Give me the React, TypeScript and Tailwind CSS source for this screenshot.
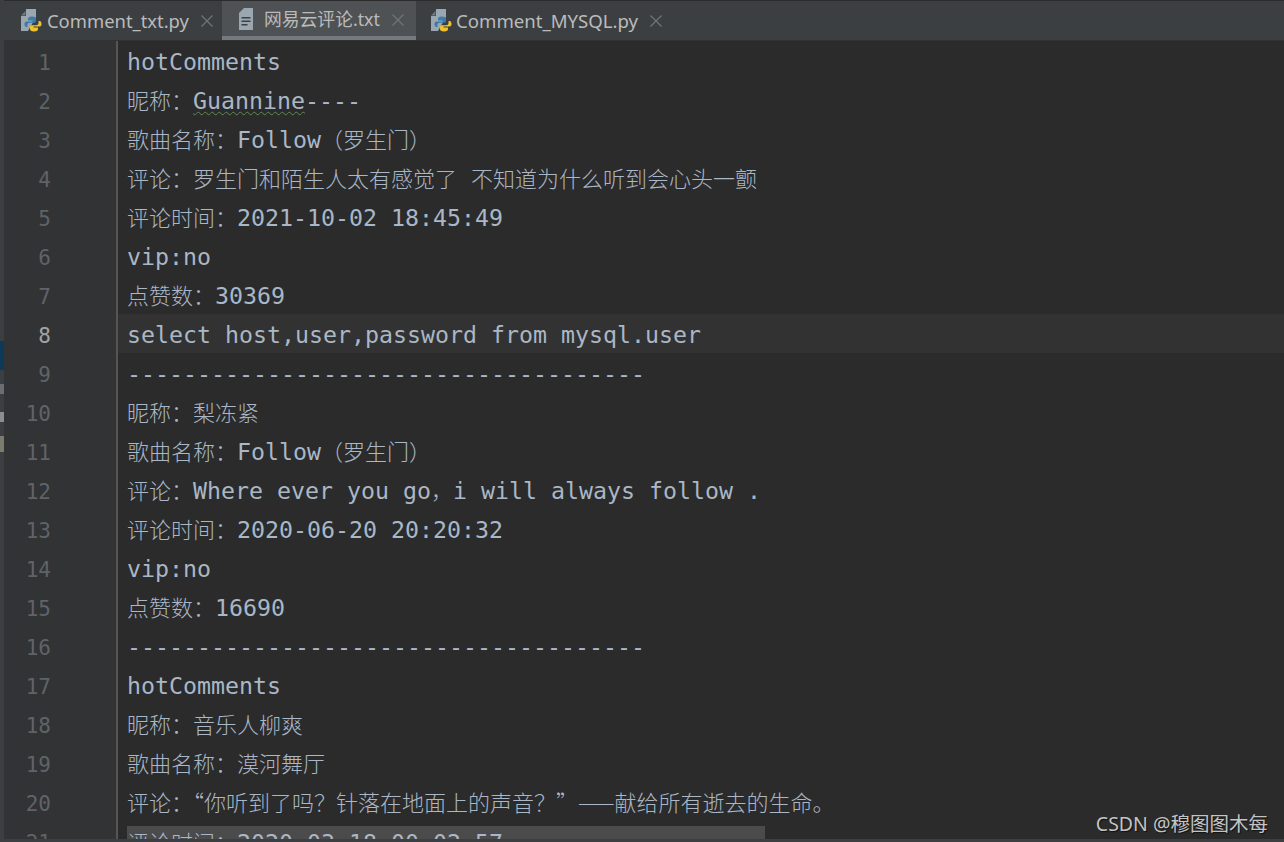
const lines = [
  "hotComments",
  "昵称：~Guannine~----",
  "歌曲名称：Follow（罗生门）",
  "评论：罗生门和陌生人太有感觉了 不知道为什么听到会心头一颤",
  "评论时间：2021-10-02 18:45:49",
  "vip:no",
  "点赞数：30369",
  "select host,user,password from mysql.user",
  "-------------------------------------",
  "昵称：梨冻紧",
  "歌曲名称：Follow（罗生门）",
  "评论：Where ever you go，i will always follow .",
  "评论时间：2020-06-20 20:20:32",
  "vip:no",
  "点赞数：16690",
  "-------------------------------------",
  "hotComments",
  "昵称：音乐人柳爽",
  "歌曲名称：漠河舞厅",
  "评论：“你听到了吗？针落在地面上的声音？”——献给所有逝去的生命。",
  "评论时间：2020-03-18 00:02:57",
];

function PyIcon() {
  return (
    <svg width="22" height="24" viewBox="0 0 22 24" className="shrink-0">
      <path d="M6 1h10v8L8 23H1V8h5z" fill="#9aa7b0" />
      <path d="M1 7.500L5.500 3v4.500z" fill="#6e7a82" />
      <path d="M12 8.500c-3 0-4 1-4 2.500v1.500h4.500v1H6.500c-1.500 0-2 1-2 2.500s.5 3 2 3h1v-2c0-1.500 1-2.200 2.500-2.200h4c1.200 0 2-.6 2-1.800V11c0-1.500-1.200-2.500-4-2.500z" fill="#3b7cab" />
      <path d="M14 23.500c3 0 4-1 4-2.500v-1.500h-4.500v-1h6c1.500 0 2-1 2-2.500s-.5-3-2-3h-1v2c0 1.500-1 2.200-2.500 2.200h-4c-1.200 0-2 .6-2 1.800V21c0 1.500 1.200 2.500 4 2.500z" fill="#f0c22e" />
    </svg>
  );
}

function TxtIcon() {
  return (
    <svg width="16" height="22" viewBox="0 0 16 22" className="shrink-0">
      <path d="M1 5l5-5h9v22H1z" fill="#9aa7b0" />
      <path d="M3.500 9h9v1.500h-9zM3.500 12.500h9V14h-9zM3.500 16h6v1.500h-6z" fill="#3c3f41" />
    </svg>
  );
}

function CloseIcon() {
  return (
    <svg width="12" height="12" viewBox="0 0 12 12" className="shrink-0">
      <path d="M.5 .5l11 11M11.500 .5l-11 11" stroke="#6e7376" strokeWidth="1.300" />
    </svg>
  );
}

// cjk and latin have different sizes in the editor, so split the line into runs
function Run({ text }: { text: string }) {
  const parts = text.match(/[\u2014\u2018-\u201d\u3000-\u9fff\uff00-\uffef]+|[^\u2014\u2018-\u201d\u3000-\u9fff\uff00-\uffef]+/g) || [];
  return (
    <>
      {parts.map((p, i) =>
        /^[\u2014\u2018-\u201d\u3000-\u9fff\uff00-\uffef]/.test(p) ? (
          <span key={i} className="text-[22px] leading-none font-['Noto_Sans_CJK_SC',sans-serif] font-light">
            {p}
          </span>
        ) : (
          <span key={i}>{p}</span>
        ),
      )}
    </>
  );
}

function CodeLine({ text, index }: { text: string; index: number }) {
  const active = index === 7;
  const selected = index === 20;
  const [before, wavy, after] = text.includes("~") ? text.split("~") : [text, "", ""];
  return (
    <div className={`flex h-[39px] shrink-0 items-start ${active ? "bg-[#323232]" : ""}`}>
      <div
        className={`flex h-[39px] w-[114px] shrink-0 items-center border-r-2 border-[#555555] bg-[#313335] pt-[6px] ${active ? "text-[#a4a3a3]" : "text-[#606366]"}`}
      >
        <span className="w-[47px] text-right font-['DejaVu_Sans_Mono',monospace] text-[21px]">{index + 1}</span>
      </div>
      <div
        className={`ml-[9px] whitespace-pre font-['DejaVu_Sans_Mono',monospace] text-[23.250px] text-[#a9b7c6] ${selected ? "mt-[5px] h-[34px] w-[638px] bg-[#4b4b4b] leading-[33px]" : "leading-[42px]"}`}
      >
        <Run text={before} />
        {wavy && (
          <span className="underline decoration-wavy decoration-[#5f8a4f] decoration-1 underline-offset-2">
            <Run text={wavy} />
          </span>
        )}
        {after && <Run text={after} />}
      </div>
    </div>
  );
}

export default function App() {
  const tabs = [
    { name: "Comment_txt.py", icon: <PyIcon />, box: "w-[218px] pl-[16px]", label: "ml-[5px] text-[18.400px]", active: false },
    { name: "网易云评论.txt", icon: <TxtIcon />, box: "w-[194px] pl-[16px]", label: "ml-[10px] text-[17.800px]", active: true },
    { name: "Comment_MYSQL.py", icon: <PyIcon />, box: "w-[258px] pl-[14px]", label: "ml-[4px] text-[18.600px]", active: false },
  ];

  return (
    <div className="relative flex h-[842px] w-[1284px] overflow-hidden bg-[#3c3f41] font-['Noto_Sans','Noto_Sans_CJK_SC',sans-serif]">
      {/* bit of the project panel that is cut off on the left */}
      <div className="flex w-[4px] shrink-0 flex-col bg-[#3c3f41]">
        <div className="mt-[341px] h-[29px] bg-[#0d3a58]" />
        <div className="mt-[14px] h-[10px] bg-[#6b6e70]" />
        <div className="mt-[18px] h-[10px] bg-[#8b8d8e]" />
        <div className="mt-[14px] h-[16px] bg-[#7d7a6e]" />
      </div>

      <div className="flex min-w-0 flex-1 flex-col">
        <div className="h-px shrink-0 bg-[#2b2b2b]" />
        <div className="flex h-[39px] shrink-0 bg-[#3c3f41]">
          {tabs.map((t) => (
            <div
              key={t.name}
              className={`flex h-full shrink-0 items-center ${t.box} ${t.active ? "border-b-[4px] border-[#747a80] bg-[#4e5254]" : "pb-[1px]"}`}
            >
              {t.icon}
              <span className={`whitespace-nowrap pt-[2px] text-[#bbbbbb] ${t.label}`}>{t.name}</span>
              <span className="ml-[12px] pt-[2px]">
                <CloseIcon />
              </span>
            </div>
          ))}
        </div>
        <div className="h-px shrink-0 bg-[#323232]" />

        <div className="flex min-h-0 flex-1 flex-col overflow-hidden bg-[#2b2b2b]">
          {lines.map((l, i) => (
            <CodeLine key={i} text={l} index={i} />
          ))}
        </div>
        <div className="h-[3px] shrink-0 bg-[#3c3f41]" />
      </div>

      <span className="absolute bottom-[4px] right-[16px] whitespace-nowrap text-[19.500px] text-[#c4c4c4] [text-shadow:1px_1px_1px_#111]">
        CSDN @穆图图木每
      </span>
    </div>
  );
}
